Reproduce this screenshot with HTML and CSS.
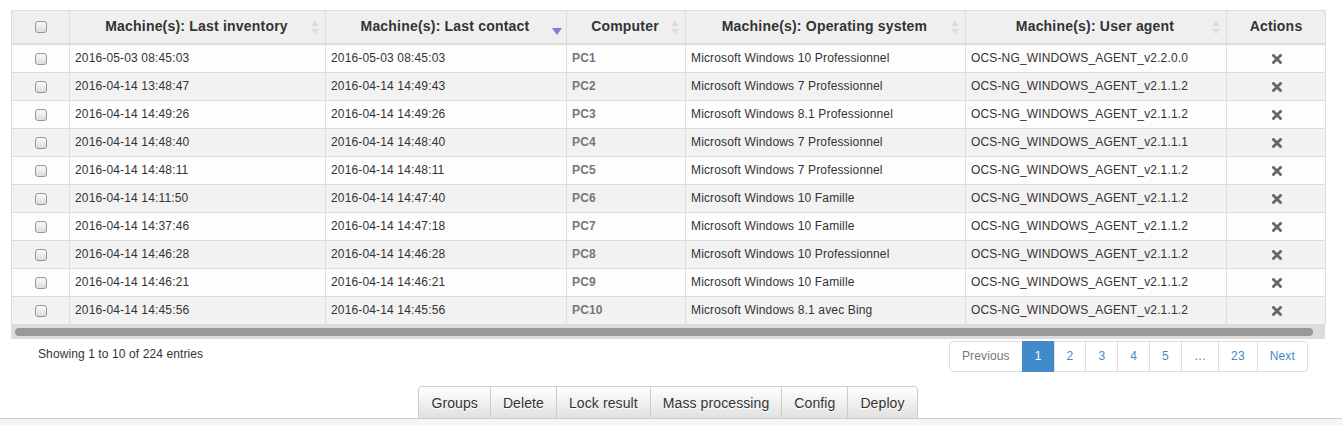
FILE: index.html
```html
<!DOCTYPE html>
<html>
<head>
<meta charset="utf-8">
<link rel="stylesheet" href="styles.css">
</head>
<body>
<div class="page">
  <div class="table-wrap">
    <table class="grid">
      <colgroup>
        <col class="c0"><col class="c1"><col class="c2"><col class="c3"><col class="c4"><col class="c5"><col class="c6">
      </colgroup>
      <thead>
        <tr>
          <th class="chk"><span class="cb"></span></th>
          <th class="sortable">Machine(s): Last inventory<span class="sort both"><svg width="8" height="13" viewBox="0 0 8 13"><path d="M4 0 L8 5 L0 5 Z M0 8 L8 8 L4 13 Z" fill="#dcdcdc"/></svg></span></th>
          <th class="sortable">Machine(s): Last contact<span class="sort desc"><svg width="10" height="7" viewBox="0 0 10 7"><path d="M0 0 L10 0 L5 7 Z" fill="#7f7fd6"/></svg></span></th>
          <th class="sortable">Computer<span class="sort both"><svg width="8" height="13" viewBox="0 0 8 13"><path d="M4 0 L8 5 L0 5 Z M0 8 L8 8 L4 13 Z" fill="#dcdcdc"/></svg></span></th>
          <th class="sortable">Machine(s): Operating system<span class="sort both"><svg width="8" height="13" viewBox="0 0 8 13"><path d="M4 0 L8 5 L0 5 Z M0 8 L8 8 L4 13 Z" fill="#dcdcdc"/></svg></span></th>
          <th class="sortable">Machine(s): User agent<span class="sort both"><svg width="8" height="13" viewBox="0 0 8 13"><path d="M4 0 L8 5 L0 5 Z M0 8 L8 8 L4 13 Z" fill="#dcdcdc"/></svg></span></th>
          <th>Actions</th>
        </tr>
      </thead>
      <tbody>
        <tr><td class="chk"><span class="cb"></span></td><td>2016-05-03 08:45:03</td><td>2016-05-03 08:45:03</td><td class="pc">PC1</td><td>Microsoft Windows 10 Professionnel</td><td>OCS-NG_WINDOWS_AGENT_v2.2.0.0</td><td class="act"><svg width="10" height="10" viewBox="0 0 10 10"><path d="M1.5 1.5 L8.5 8.5 M8.5 1.5 L1.5 8.5" stroke="#666" stroke-width="2.8" stroke-linecap="square"/></svg></td></tr>
        <tr><td class="chk"><span class="cb"></span></td><td>2016-04-14 13:48:47</td><td>2016-04-14 14:49:43</td><td class="pc">PC2</td><td>Microsoft Windows 7 Professionnel</td><td>OCS-NG_WINDOWS_AGENT_v2.1.1.2</td><td class="act"><svg width="10" height="10" viewBox="0 0 10 10"><path d="M1.5 1.5 L8.5 8.5 M8.5 1.5 L1.5 8.5" stroke="#666" stroke-width="2.8" stroke-linecap="square"/></svg></td></tr>
        <tr><td class="chk"><span class="cb"></span></td><td>2016-04-14 14:49:26</td><td>2016-04-14 14:49:26</td><td class="pc">PC3</td><td>Microsoft Windows 8.1 Professionnel</td><td>OCS-NG_WINDOWS_AGENT_v2.1.1.2</td><td class="act"><svg width="10" height="10" viewBox="0 0 10 10"><path d="M1.5 1.5 L8.5 8.5 M8.5 1.5 L1.5 8.5" stroke="#666" stroke-width="2.8" stroke-linecap="square"/></svg></td></tr>
        <tr><td class="chk"><span class="cb"></span></td><td>2016-04-14 14:48:40</td><td>2016-04-14 14:48:40</td><td class="pc">PC4</td><td>Microsoft Windows 7 Professionnel</td><td>OCS-NG_WINDOWS_AGENT_v2.1.1.1</td><td class="act"><svg width="10" height="10" viewBox="0 0 10 10"><path d="M1.5 1.5 L8.5 8.5 M8.5 1.5 L1.5 8.5" stroke="#666" stroke-width="2.8" stroke-linecap="square"/></svg></td></tr>
        <tr><td class="chk"><span class="cb"></span></td><td>2016-04-14 14:48:11</td><td>2016-04-14 14:48:11</td><td class="pc">PC5</td><td>Microsoft Windows 7 Professionnel</td><td>OCS-NG_WINDOWS_AGENT_v2.1.1.2</td><td class="act"><svg width="10" height="10" viewBox="0 0 10 10"><path d="M1.5 1.5 L8.5 8.5 M8.5 1.5 L1.5 8.5" stroke="#666" stroke-width="2.8" stroke-linecap="square"/></svg></td></tr>
        <tr><td class="chk"><span class="cb"></span></td><td>2016-04-14 14:11:50</td><td>2016-04-14 14:47:40</td><td class="pc">PC6</td><td>Microsoft Windows 10 Famille</td><td>OCS-NG_WINDOWS_AGENT_v2.1.1.2</td><td class="act"><svg width="10" height="10" viewBox="0 0 10 10"><path d="M1.5 1.5 L8.5 8.5 M8.5 1.5 L1.5 8.5" stroke="#666" stroke-width="2.8" stroke-linecap="square"/></svg></td></tr>
        <tr><td class="chk"><span class="cb"></span></td><td>2016-04-14 14:37:46</td><td>2016-04-14 14:47:18</td><td class="pc">PC7</td><td>Microsoft Windows 10 Famille</td><td>OCS-NG_WINDOWS_AGENT_v2.1.1.2</td><td class="act"><svg width="10" height="10" viewBox="0 0 10 10"><path d="M1.5 1.5 L8.5 8.5 M8.5 1.5 L1.5 8.5" stroke="#666" stroke-width="2.8" stroke-linecap="square"/></svg></td></tr>
        <tr><td class="chk"><span class="cb"></span></td><td>2016-04-14 14:46:28</td><td>2016-04-14 14:46:28</td><td class="pc">PC8</td><td>Microsoft Windows 10 Professionnel</td><td>OCS-NG_WINDOWS_AGENT_v2.1.1.2</td><td class="act"><svg width="10" height="10" viewBox="0 0 10 10"><path d="M1.5 1.5 L8.5 8.5 M8.5 1.5 L1.5 8.5" stroke="#666" stroke-width="2.8" stroke-linecap="square"/></svg></td></tr>
        <tr><td class="chk"><span class="cb"></span></td><td>2016-04-14 14:46:21</td><td>2016-04-14 14:46:21</td><td class="pc">PC9</td><td>Microsoft Windows 10 Famille</td><td>OCS-NG_WINDOWS_AGENT_v2.1.1.2</td><td class="act"><svg width="10" height="10" viewBox="0 0 10 10"><path d="M1.5 1.5 L8.5 8.5 M8.5 1.5 L1.5 8.5" stroke="#666" stroke-width="2.8" stroke-linecap="square"/></svg></td></tr>
        <tr><td class="chk"><span class="cb"></span></td><td>2016-04-14 14:45:56</td><td>2016-04-14 14:45:56</td><td class="pc">PC10</td><td>Microsoft Windows 8.1 avec Bing</td><td>OCS-NG_WINDOWS_AGENT_v2.1.1.2</td><td class="act"><svg width="10" height="10" viewBox="0 0 10 10"><path d="M1.5 1.5 L8.5 8.5 M8.5 1.5 L1.5 8.5" stroke="#666" stroke-width="2.8" stroke-linecap="square"/></svg></td></tr>
      </tbody>
    </table>
    <div class="scrollbar"><div class="thumb"></div></div>
  </div>
  <div class="footer-row">
    <div class="info">Showing 1 to 10 of 224 entries</div>
    <ul class="pagination">
      <li class="disabled">Previous</li>
      <li class="active">1</li>
      <li>2</li>
      <li>3</li>
      <li>4</li>
      <li>5</li>
      <li class="disabled">…</li>
      <li>23</li>
      <li>Next</li>
    </ul>
  </div>
  <div class="actions-bar">
    <div class="btn-group">
      <button class="btn">Groups</button>
      <button class="btn">Delete</button>
      <button class="btn">Lock result</button>
      <button class="btn">Mass processing</button>
      <button class="btn">Config</button>
      <button class="btn">Deploy</button>
    </div>
  </div>
</div>
<div class="site-footer"></div>
</body>
</html>
```
FILE: styles.css
```css
* { box-sizing: border-box; }
html, body { margin: 0; padding: 0; background: #fff; }
body {
  font-family: "Liberation Sans", Arial, sans-serif;
  color: #333;
  font-size: 12px;
  line-height: 17px;
  height: 425px;
  overflow: hidden;
}
.page { padding: 10px 17px 0 11px; }
.table-wrap { width: 1314px; }
.grid {
  border-collapse: collapse;
  table-layout: fixed;
  width: 1314px;
}
.c0 { width: 58px; }
.c1 { width: 256px; }
.c2 { width: 241px; }
.c3 { width: 119px; }
.c4 { width: 280px; }
.c5 { width: 261px; }
.c6 { width: 99px; }
.grid th {
  background: #efefef;
  border: 1px solid #dddddd;
  border-bottom: 2px solid #dddddd;
  font-size: 14px;
  line-height: 20px;
  font-weight: bold;
  letter-spacing: 0.2px;
  text-align: center;
  padding: 4px 8px 6px 6px;
  position: relative;
  white-space: nowrap;
  color: #333;
}
.grid th:last-child { padding: 4px 5px 6px; }
.grid td {
  border: 1px solid #dddddd;
  border-top: none;
  padding: 5px;
  font-size: 12px;
  line-height: 17px;
  letter-spacing: 0.15px;
  white-space: nowrap;
  background: #fdfdfd;
}
.grid tbody tr:nth-child(even) td { background: #f2f2f2; }
.grid td.pc { font-weight: bold; color: #777; }
.grid td.act { text-align: center; line-height: 0; padding: 9px 5px 8px; }
.grid td.act svg { display: inline-block; margin-left: 2px; }
.chk { text-align: center; line-height: 0 !important; }
.grid td.chk { padding: 8px 5px 7px; }
.grid th.chk { padding: 10px 5px 10px; }
.cb {
  display: inline-block;
  width: 12px;
  height: 12px;
  border: 1px solid #979797;
  border-radius: 3px;
  background: linear-gradient(#fafafa, #dcdcdc);
  margin-left: 0;
}
.sort {
  position: absolute;
  right: 6px;
  top: 0;
  bottom: 0;
  display: flex;
  align-items: center;
}
.sort.desc { align-items: flex-end; padding-bottom: 8px; right: 4px; }
.sort svg { display: block; }
.scrollbar {
  height: 14px;
  background: #dcdcdc;
  padding: 3px 12px 3px 4px;
}
.thumb {
  height: 8px;
  background: #999;
  border-radius: 4px;
}
.footer-row {
  display: flex;
  justify-content: space-between;
  align-items: flex-start;
  padding: 2px 0 0 27px;
  width: 1314px;
}
.info { padding-top: 5px; font-size: 12px; letter-spacing: 0.1px; }
.pagination {
  list-style: none;
  margin: 0;
  padding: 0;
  display: flex;
  border-radius: 4px;
  margin-right: 17px;
}
.pagination li {
  padding: 6px 12px;
  font-size: 12px;
  line-height: 17px;
  letter-spacing: 0.15px;
  color: #428bca;
  border: 1px solid #ddd;
  margin-left: -1px;
  background: #fff;
}
.pagination li:first-child { border-radius: 4px 0 0 4px; margin-left: 0; }
.pagination li:last-child { border-radius: 0 4px 4px 0; }
.pagination li.disabled { color: #777; }
.pagination li.active { background: #428bca; border-color: #428bca; color: #fff; }
.actions-bar {
  display: flex;
  justify-content: center;
  padding: 14px 0 0 0;
}
.btn-group { display: flex; }
.btn {
  font-family: "Liberation Sans", Arial, sans-serif;
  font-size: 14px;
  line-height: 20px;
  letter-spacing: 0.1px;
  padding: 6px 12px;
  color: #333;
  border: 1px solid #ccc;
  background: linear-gradient(#ffffff, #e0e0e0);
  margin-left: -1px;
  border-radius: 0;
  box-shadow: inset 0 1px 0 rgba(255,255,255,.15), 0 1px 1px rgba(0,0,0,.075);
  text-shadow: 0 1px 0 #fff;
}
.btn:first-child { border-radius: 4px 0 0 4px; margin-left: 0; }
.btn:last-child { border-radius: 0 4px 4px 0; }
.site-footer {
  position: absolute;
  left: 0;
  right: 0;
  top: 418px;
  height: 10px;
  background: #f5f5f5;
  border-top: 1px solid #cccccc;
}
```
